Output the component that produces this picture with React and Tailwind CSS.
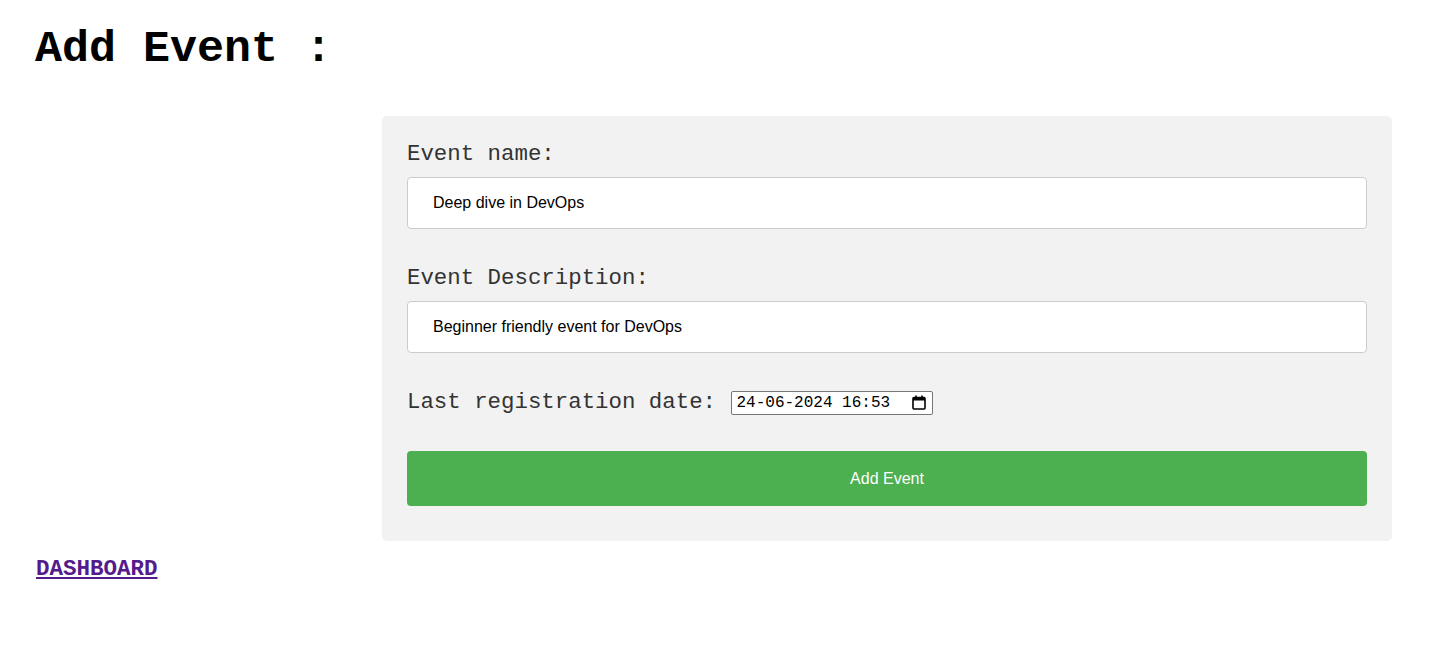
import React from "react";

const mono = { fontFamily: '"Liberation Mono", "Courier New", monospace' };

function CalendarIcon() {
  return (
    <svg width="14" height="15" viewBox="0 0 14 15" fill="none">
      <rect x="1" y="2.5" width="12" height="11.5" rx="1" stroke="#000" strokeWidth="1.6" />
      <rect x="1" y="2.5" width="12" height="3" fill="#000" />
      <rect x="3.2" y="0.5" width="1.6" height="3" fill="#000" />
      <rect x="9.2" y="0.5" width="1.6" height="3" fill="#000" />
    </svg>
  );
}

export default function App() {
  return (
    <div className="min-h-[645px] bg-white px-[32px] pt-[24px] text-black">
      <h1 className="ml-[3px] text-[45px] font-bold leading-[52px] font-['Liberation_Mono',monospace]">
        Add Event :
      </h1>

      <form className="ml-[350px] mt-[40px] w-[1010px] rounded-[5px] bg-[#f2f2f2] px-[25px] pt-[26px] pb-[35px]">
        <label className="mb-[10px] block text-[22.4px] leading-[25px] text-[#333] font-['Liberation_Mono',monospace]">
          Event name:
        </label>
        <input
          type="text"
          defaultValue="Deep dive in DevOps"
          className="mb-[37px] block h-[52px] w-full rounded-[4px] border border-[#ccc] bg-white px-[25px] text-[16px] text-black outline-none font-['Liberation_Sans',Arial,sans-serif]"
        />

        <label className="mb-[10px] block text-[22.4px] leading-[25px] text-[#333] font-['Liberation_Mono',monospace]">
          Event Description:
        </label>
        <input
          type="text"
          defaultValue="Beginner friendly event for DevOps"
          className="mb-[37px] block h-[52px] w-full rounded-[4px] border border-[#ccc] bg-white px-[25px] text-[16px] text-black outline-none font-['Liberation_Sans',Arial,sans-serif]"
        />

        <div className="flex h-[25px] items-center">
          <span className="text-[22.4px] leading-[25px] text-[#333] whitespace-pre font-['Liberation_Mono',monospace]">
            Last registration date:{" "}
          </span>
          <span
            className="ml-[2px] inline-flex h-[24px] w-[202px] items-center justify-between rounded-[2px] border border-[#767676] bg-white pl-[4px] pr-[6px] text-[16px] text-black"
            style={mono}
          >
            <span>24-06-2024 16:53</span>
            <CalendarIcon />
          </span>
        </div>

        <button
          type="button"
          className="mt-[36px] block h-[55px] w-full rounded-[4px] bg-[#4caf50] text-[16px] text-white font-['Liberation_Sans',Arial,sans-serif]"
        >
          Add Event
        </button>
      </form>

      <a
        href="#"
        className="mt-[16px] ml-[4px] inline-block text-[22.5px] font-bold leading-[25px] text-[#551a8b] underline font-['Liberation_Mono',monospace]"
      >
        DASHBOARD
      </a>
    </div>
  );
}
